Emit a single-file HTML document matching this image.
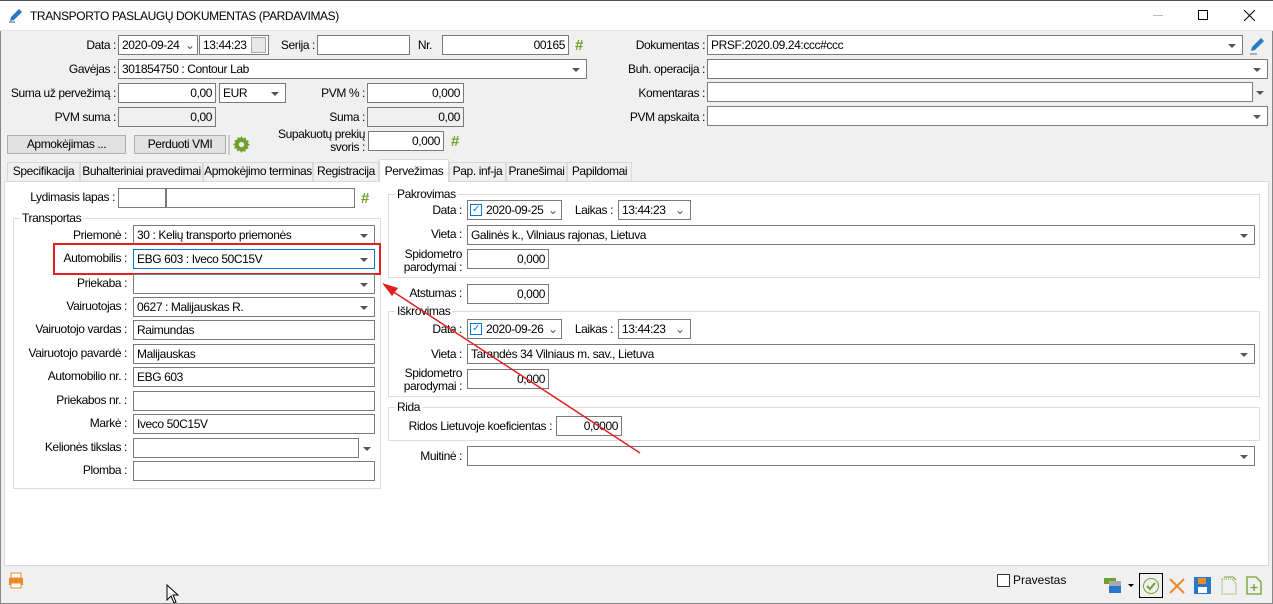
<!DOCTYPE html>
<html><head><meta charset="utf-8"><style>
*{box-sizing:border-box;margin:0;padding:0}
body{width:1273px;height:604px;overflow:hidden;background:#f0f0f0;font-family:"Liberation Sans",sans-serif;font-size:12px;letter-spacing:-0.4px;color:#000;position:relative}
div,span{position:absolute}
.l{text-align:right;white-space:nowrap;line-height:14px}
.i{background:#fff;border:1px solid #7a7a7a;height:20px;line-height:18px;padding:0 3px;white-space:nowrap;overflow:hidden}
.g{background:#f0f0f0}
.r{text-align:right}
.dd::after{content:"";position:absolute;right:6px;top:8px;border-left:4px solid transparent;border-right:4px solid transparent;border-top:4px solid #555}
.ar{width:8px;height:4px;border-left:4px solid transparent;border-right:4px solid transparent;border-top:4px solid #555}
.btn{background:#e1e1e1;border:1px solid #adadad;text-align:center;line-height:17px;height:19px}
.tab{top:162px;height:19px;line-height:17px;border:1px solid #d9d9d9;border-bottom:none;background:#f0f0f0;text-align:center}
.grp{border:1px solid #dcdcdc}
.gt{background:#fff;padding:0 2px;line-height:14px}
.hash{color:#6ea22c;font-weight:bold;font-size:15px;letter-spacing:0}
</style></head><body>
<!-- title -->
<div style="left:0;top:0;width:1273px;height:31px;background:#fff;border-bottom:1px solid #e5e5e5;border-top:1px solid #4a5560"></div>
<svg style="position:absolute;left:8px;top:7px" width="16" height="16"><path d="M2 14 L3 10 L11 2 L14 5 L6 13 Z" fill="#2a78c8"/><path d="M1 15h6" stroke="#555"/></svg>
<div style="left:30px;top:9px;line-height:14px">TRANSPORTO PASLAUGŲ DOKUMENTAS (PARDAVIMAS)</div>
<div style="left:1153px;top:15px;width:10px;height:1px;background:#bbb"></div>
<div style="left:1198px;top:10px;width:10px;height:10px;border:1px solid #000"></div>
<svg style="position:absolute;left:1244px;top:10px" width="11" height="11"><path d="M0 0L11 11M11 0L0 11" stroke="#000"/></svg>
<div style="left:0;top:31px;width:1px;height:573px;background:#888"></div>
<div style="left:1272px;top:31px;width:1px;height:573px;background:#888"></div>

<!-- top form -->
<div class="l" style="left:0;width:116px;top:38px">Data :</div>
<div class="i" style="left:118px;top:35px;width:80px">2020-09-24 <span style="left:66px;top:0;color:#555">⌄</span></div>
<div class="i" style="left:199px;top:35px;width:70px">13:44:23<span style="left:51px;top:1px;width:15px;height:16px;background:#e8e8e8;border:1px solid #aaa"></span></div>
<div class="l" style="left:250px;width:65px;top:38px">Serija :</div>
<div class="i" style="left:317px;top:35px;width:93px"></div>
<div class="l" style="left:380px;width:52px;top:38px">Nr.</div>
<div class="i r" style="left:442px;top:35px;width:127px">00165</div>
<div class="hash" style="left:575px;top:37px">#</div>
<div class="l" style="left:600px;width:105px;top:38px">Dokumentas :</div>
<div class="i dd" style="left:707px;top:35px;width:536px">PRSF:2020.09.24:ccc#ccc</div>
<svg style="position:absolute;left:1248px;top:37px" width="18" height="18"><path d="M3 14 L4 10 L13 1 L16 4 L7 13 Z" fill="#2a78c8"/><path d="M2 17h7" stroke="#666"/></svg>

<div class="l" style="left:0;width:116px;top:62px">Gavėjas :</div>
<div class="i dd" style="left:118px;top:59px;width:469px">301854750 : Contour Lab</div>
<div class="l" style="left:600px;width:105px;top:62px">Buh. operacija :</div>
<div class="i dd" style="left:707px;top:59px;width:561px"></div>

<div class="l" style="left:0;width:116px;top:86px">Suma už pervežimą :</div>
<div class="i r" style="left:118px;top:83px;width:98px">0,00</div>
<div class="i dd" style="left:219px;top:83px;width:67px">EUR</div>
<div class="l" style="left:280px;width:85px;top:86px">PVM % :</div>
<div class="i r" style="left:367px;top:83px;width:97px">0,000</div>
<div class="l" style="left:600px;width:105px;top:86px">Komentaras :</div>
<div class="i" style="left:707px;top:82px;width:546px"></div>
<div class="ar" style="left:1256px;top:91px"></div>

<div class="l" style="left:0;width:116px;top:110px">PVM suma :</div>
<div class="i r g" style="left:118px;top:107px;width:98px">0,00</div>
<div class="l" style="left:280px;width:85px;top:110px">Suma :</div>
<div class="i r g" style="left:367px;top:107px;width:97px">0,00</div>
<div class="l" style="left:600px;width:105px;top:110px">PVM apskaita :</div>
<div class="i dd" style="left:707px;top:106px;width:561px"></div>

<div class="btn" style="left:7px;top:135px;width:119px">Apmokėjimas ...</div>
<div class="btn" style="left:134px;top:135px;width:92px">Perduoti VMI</div>
<div style="left:228px;top:135px;width:2px;height:20px;background:#ccc"></div>
<svg style="position:absolute;left:233px;top:136px" width="17" height="17" viewBox="0 0 16 16"><path d="M8 0l1.5 2.2 2.5-.8.3 2.6 2.6.3-.8 2.5L16 8l-2.2 1.5.8 2.5-2.6.3-.3 2.6-2.5-.8L8 16l-1.5-2.2-2.5.8-.3-2.6-2.6-.3.8-2.5L0 8l2.2-1.5-.8-2.5 2.6-.3.3-2.6 2.5.8z" fill="#6ea22c"/><circle cx="8" cy="8" r="2.5" fill="#f0f0f0"/></svg>
<div class="l" style="left:250px;width:115px;top:128px;line-height:13px">Supakuotų prekių<br>svoris :</div>
<div class="i r" style="left:368px;top:131px;width:76px">0,000</div>
<div class="hash" style="left:451px;top:133px">#</div>

<!-- tabs -->
<div style="left:4px;top:181px;width:1265px;height:385px;background:#fff;border:1px solid #d9d9d9"></div>
<div class="tab" style="left:7px;width:73px">Specifikacija</div>
<div class="tab" style="left:80px;width:123px">Buhalteriniai pravedimai</div>
<div class="tab" style="left:203px;width:110px">Apmokėjimo terminas</div>
<div class="tab" style="left:313px;width:66px">Registracija</div>
<div class="tab" style="left:379px;width:70px;top:159px;height:23px;background:#fff;line-height:22px">Pervežimas</div>
<div class="tab" style="left:449px;width:57px">Pap. inf-ja</div>
<div class="tab" style="left:506px;width:61px">Pranešimai</div>
<div class="tab" style="left:567px;width:65px">Papildomai</div>

<!-- left -->
<div class="l" style="left:0;width:115px;top:190px">Lydimasis lapas :</div>
<div class="i" style="left:118px;top:188px;width:48px"></div>
<div class="i" style="left:166px;top:188px;width:189px"></div>
<div class="hash" style="left:361px;top:190px">#</div>
<div class="grp" style="left:13px;top:218px;width:368px;height:271px"></div>
<div class="gt" style="left:20px;top:211px">Transportas</div>
<div class="l" style="left:0;width:127px;top:228px">Priemonė :</div>
<div class="i dd" style="left:133px;top:225px;width:242px">30 : Kelių transporto priemonės</div>
<div class="l" style="left:0;width:127px;top:251px">Automobilis :</div>
<div class="i dd" style="left:133px;top:249px;width:242px;border-color:#0078d7">EBG 603 : Iveco 50C15V</div>
<div style="left:53px;top:243px;width:328px;height:32px;border:2px solid #e51e1e"></div>
<div class="l" style="left:0;width:127px;top:276px">Priekaba :</div>
<div class="i dd" style="left:133px;top:274px;width:242px"></div>
<div class="l" style="left:0;width:127px;top:299px">Vairuotojas :</div>
<div class="i dd" style="left:133px;top:297px;width:242px">0627 : Malijauskas R.</div>
<div class="l" style="left:0;width:127px;top:322px">Vairuotojo vardas :</div>
<div class="i" style="left:133px;top:320px;width:242px">Raimundas</div>
<div class="l" style="left:0;width:127px;top:346px">Vairuotojo pavardė :</div>
<div class="i" style="left:133px;top:344px;width:242px">Malijauskas</div>
<div class="l" style="left:0;width:127px;top:369px">Automobilio nr. :</div>
<div class="i" style="left:133px;top:367px;width:242px">EBG 603</div>
<div class="l" style="left:0;width:127px;top:393px">Priekabos nr. :</div>
<div class="i" style="left:133px;top:391px;width:242px"></div>
<div class="l" style="left:0;width:127px;top:416px">Markė :</div>
<div class="i" style="left:133px;top:414px;width:242px">Iveco 50C15V</div>
<div class="l" style="left:0;width:127px;top:440px">Kelionės tikslas :</div>
<div class="i" style="left:133px;top:438px;width:226px"></div>
<div class="ar" style="left:363px;top:447px"></div>
<div class="l" style="left:0;width:127px;top:463px">Plomba :</div>
<div class="i" style="left:133px;top:461px;width:242px"></div>

<!-- right -->
<div class="grp" style="left:388px;top:194px;width:872px;height:84px"></div>
<div class="gt" style="left:395px;top:187px">Pakrovimas</div>
<div class="l" style="left:380px;width:82px;top:203px">Data :</div>
<div class="i" style="left:467px;top:200px;width:95px;padding-left:18px">2020-09-25<span style="left:2px;top:3px;width:12px;height:12px;border:1px solid #0078d7;color:#0078d7;font-size:10px;line-height:10px;text-align:center">✓</span><span style="left:80px;top:0;color:#555">⌄</span></div>
<div class="l" style="left:560px;width:53px;top:203px">Laikas :</div>
<div class="i" style="left:618px;top:200px;width:73px">13:44:23<span style="left:56px;top:0;color:#555">⌄</span></div>
<div class="l" style="left:380px;width:82px;top:227px">Vieta :</div>
<div class="i dd" style="left:467px;top:225px;width:788px">Galinės k., Vilniaus rajonas, Lietuva</div>
<div class="l" style="left:380px;width:82px;top:248px;line-height:13px">Spidometro<br>parodymai :</div>
<div class="i r" style="left:467px;top:249px;width:82px">0,000</div>
<div class="l" style="left:380px;width:82px;top:286px">Atstumas :</div>
<div class="i r" style="left:467px;top:284px;width:82px">0,000</div>
<div class="grp" style="left:388px;top:311px;width:872px;height:86px"></div>
<div class="gt" style="left:395px;top:304px">Iškrovimas</div>
<div class="l" style="left:380px;width:82px;top:322px">Data :</div>
<div class="i" style="left:467px;top:319px;width:95px;padding-left:18px">2020-09-26<span style="left:2px;top:3px;width:12px;height:12px;border:1px solid #0078d7;color:#0078d7;font-size:10px;line-height:10px;text-align:center">✓</span><span style="left:80px;top:0;color:#555">⌄</span></div>
<div class="l" style="left:560px;width:53px;top:322px">Laikas :</div>
<div class="i" style="left:618px;top:319px;width:73px">13:44:23<span style="left:56px;top:0;color:#555">⌄</span></div>
<div class="l" style="left:380px;width:82px;top:347px">Vieta :</div>
<div class="i dd" style="left:467px;top:344px;width:788px">Tarandės 34 Vilniaus m. sav., Lietuva</div>
<div class="l" style="left:380px;width:82px;top:367px;line-height:13px">Spidometro<br>parodymai :</div>
<div class="i r" style="left:467px;top:369px;width:82px">0,000</div>
<div class="grp" style="left:388px;top:407px;width:872px;height:34px"></div>
<div class="gt" style="left:395px;top:400px">Rida</div>
<div class="l" style="left:380px;width:172px;top:419px">Ridos Lietuvoje koeficientas :</div>
<div class="i r" style="left:556px;top:416px;width:66px">0,0000</div>
<div class="l" style="left:380px;width:82px;top:449px">Muitinė :</div>
<div class="i dd" style="left:467px;top:446px;width:788px"></div>

<svg style="position:absolute;left:0;top:0" width="1273" height="604"><path d="M640 453 L386 287" stroke="#e51e1e" stroke-width="1.5"/><path d="M382 283 L398 288 L392 296 Z" fill="#e51e1e"/></svg>

<!-- bottom -->
<svg style="position:absolute;left:8px;top:572px" width="16" height="17"><rect x="3" y="1" width="10" height="5" fill="#fff" stroke="#e88b2a"/><rect x="1" y="6" width="14" height="7" fill="#e88b2a"/><rect x="3" y="11" width="10" height="5" fill="#fff" stroke="#e88b2a"/></svg>
<svg style="position:absolute;left:166px;top:584px" width="14" height="20"><path d="M1 1 L1 16 L5 12 L8 19 L10 18 L7 11 L12 11 Z" fill="#fff" stroke="#000"/></svg>
<div style="left:997px;top:574px;width:13px;height:13px;border:1px solid #333;background:#fff"></div>
<div style="left:1013px;top:573px;line-height:14px;letter-spacing:0">Pravestas</div>
<svg style="position:absolute;left:1103px;top:575px" width="34" height="20"><rect x="1" y="3" width="12" height="6" fill="#6ea22c"/><rect x="6" y="6" width="12" height="5" fill="#aaa"/><rect x="6" y="11" width="12" height="7" fill="#2a78c8"/><path d="M25 9h6l-3 3z" fill="#000"/></svg>
<div style="left:1139px;top:573px;width:24px;height:25px;border:1px solid #000"></div>
<svg style="position:absolute;left:1142px;top:577px" width="18" height="18"><circle cx="9" cy="9" r="7.5" fill="none" stroke="#6ea22c"/><path d="M5 9l3 3 5-6" stroke="#6ea22c" stroke-width="2" fill="none"/></svg>
<svg style="position:absolute;left:1169px;top:578px" width="16" height="16"><path d="M1 1L15 15M15 1L1 15" stroke="#e88b2a" stroke-width="2"/></svg>
<svg style="position:absolute;left:1194px;top:577px" width="17" height="17"><rect x="0" y="0" width="17" height="17" fill="#2a78c8"/><rect x="4" y="1" width="8" height="6" fill="#e88b2a"/><rect x="4" y="10" width="9" height="6" fill="#fff"/></svg>
<svg style="position:absolute;left:1221px;top:576px" width="16" height="19"><path d="M1 3h10l4 4v11H1z" fill="none" stroke="#6ea22c" stroke-dasharray="1 1"/><path d="M3 1h9l3 3" fill="none" stroke="#6ea22c"/></svg>
<svg style="position:absolute;left:1246px;top:576px" width="16" height="19"><path d="M1 1h9l5 5v12H1z" fill="none" stroke="#6ea22c" stroke-width="1.3"/><path d="M8 8v7M4.5 11.5h7" stroke="#6ea22c" stroke-width="1.3"/></svg>
<div style="left:0;top:603px;width:1273px;height:1px;background:#888"></div>
</body></html>
